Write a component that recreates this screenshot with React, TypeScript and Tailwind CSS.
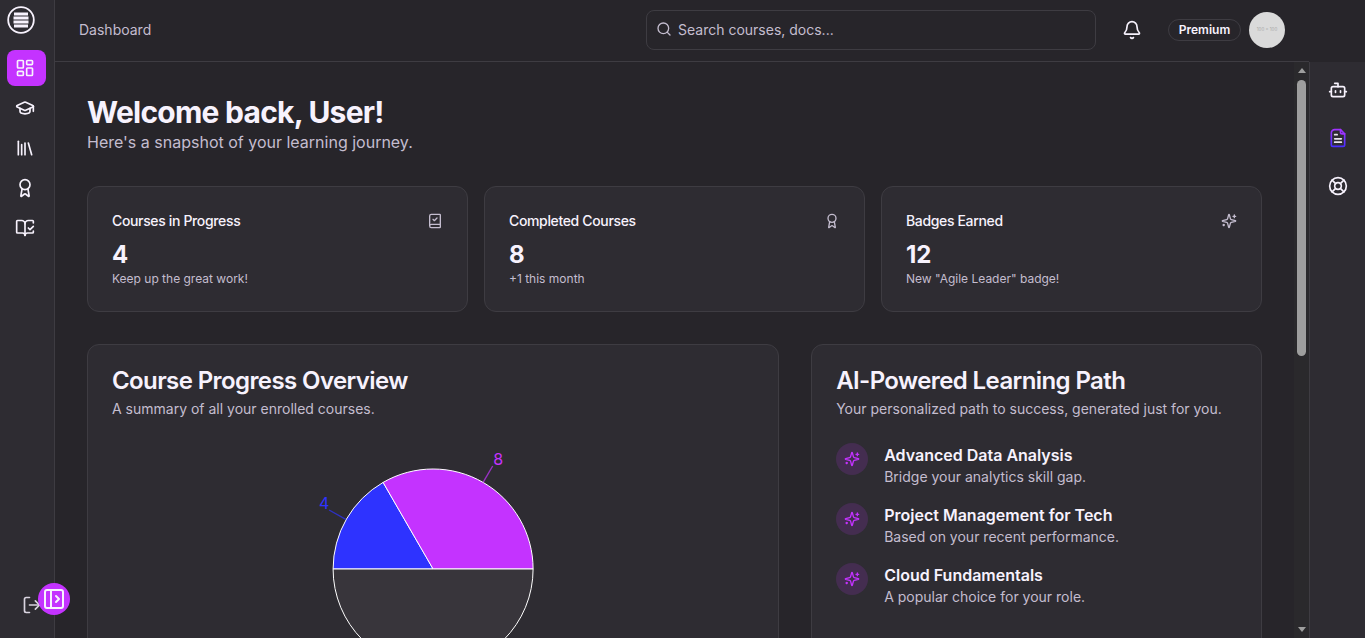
import { Award, Bell, BookCheck, BookOpenCheck, Bot, GraduationCap, LayoutDashboard, Library, LifeBuoy, LogOut, PanelLeftOpen, Search } from 'lucide-react'

const navItems = [
  { icon: LayoutDashboard, active: true },
  { icon: GraduationCap },
  { icon: Library },
  { icon: Award },
  { icon: BookOpenCheck },
]

function SparkleIcon({ size = 16, className = '' }: { size?: number; className?: string }) {
  return (
    <svg width={size} height={size} viewBox="0 0 24 24" fill="none" stroke="currentColor" strokeWidth="2" strokeLinecap="round" strokeLinejoin="round" className={className}>
      <path d="M9.937 15.5A2 2 0 0 0 8.5 14.063l-6.135-1.582a.5.5 0 0 1 0-.962L8.5 9.936A2 2 0 0 0 9.937 8.5l1.582-6.135a.5.5 0 0 1 .963 0L14.063 8.5A2 2 0 0 0 15.5 9.937l6.135 1.581a.5.5 0 0 1 0 .964L15.5 14.063a2 2 0 0 0-1.437 1.437l-1.582 6.135a.5.5 0 0 1-.963 0z" />
      <path d="M20 3v4" />
      <path d="M22 5h-4" />
      <path d="M4 17v2" />
      <path d="M5 18H3" />
    </svg>
  )
}

const stats = [
  { title: 'Courses in Progress', value: '4', note: 'Keep up the great work!', icon: BookCheck },
  { title: 'Completed Courses', value: '8', note: '+1 this month', icon: Award },
  { title: 'Badges Earned', value: '12', note: 'New "Agile Leader" badge!', icon: SparkleIcon },
]

const paths = [
  { title: 'Advanced Data Analysis', note: 'Bridge your analytics skill gap.' },
  { title: 'Project Management for Tech', note: 'Based on your recent performance.' },
  { title: 'Cloud Fundamentals', note: 'A popular choice for your role.' },
]

function Logo() {
  return (
    <svg width="28" height="28" viewBox="0 0 28 28" fill="none">
      <circle cx="14" cy="14" r="12.8" stroke="#f7f2fd" strokeWidth="1.8" />
      <rect x="7" y="6.5" width="14" height="3" fill="#f7f2fd" />
      <rect x="6.5" y="10.5" width="15" height="3" fill="#f7f2fd" />
      <rect x="6.5" y="14.5" width="15" height="3" fill="#f7f2fd" />
      <rect x="7" y="18.5" width="14" height="3" fill="#f7f2fd" />
    </svg>
  )
}

function NotesIcon() {
  return (
    <svg width="20" height="20" viewBox="0 0 24 24" fill="none" strokeWidth="2" strokeLinecap="round" strokeLinejoin="round">
      <defs>
        <linearGradient id="notes" x1="0" y1="0" x2="0" y2="1">
          <stop offset="0" stopColor="#a033ff" />
          <stop offset="1" stopColor="#4a2eff" />
        </linearGradient>
      </defs>
      <path d="M15 2H8a4 4 0 0 0-4 4v14a2 2 0 0 0 2 2h12a2 2 0 0 0 2-2V7Z" stroke="url(#notes)" />
      <path d="M15 2v3a2 2 0 0 0 2 2h3" stroke="#a033ff" />
      <path d="M8 8h3M8 13h8M8 17h8" stroke="#e9e4ef" />
    </svg>
  )
}

function ProgressPie() {
  return (
    <svg className="block h-[248px] w-full overflow-visible" viewBox="0 0 642 248">
      <path d="M321 124 L221 124 A100 100 0 0 1 271 37.4 Z" fill="#2e33ff" stroke="#fff" />
      <path d="M321 124 L271 37.4 A100 100 0 0 1 421 124 Z" fill="#c433ff" stroke="#fff" />
      <path d="M321 124 L421 124 A100 100 0 0 1 221 124 Z" fill="#38353b" stroke="#fff" />
      <path d="M233.7 74.3 L217 65" stroke="#2e33ff" strokeOpacity="0.7" strokeWidth="1.4" fill="none" />
      <path d="M371 37.4 L380.6 21" stroke="#c433ff" strokeOpacity="0.7" strokeWidth="1.4" fill="none" />
      <text x="212" y="64" textAnchor="middle" fontSize="16" fill="#2e33ff">4</text>
      <text x="386" y="20" textAnchor="middle" fontSize="16" fill="#c433ff">8</text>
    </svg>
  )
}

export default function App() {
  return (
    <div className="relative flex h-screen w-full overflow-hidden bg-[#27252a] text-[#f7f2fd] [font-family:Inter,sans-serif]">
      <aside className="flex w-[55px] shrink-0 flex-col border-r border-[#3e3c42] bg-[#2e2c32] pl-[7px] pt-[6px] pb-[23px]">
        <Logo />
        <nav className="mt-4 flex flex-col gap-1">
          {navItems.map(({ icon: Icon, active }, i) => (
            <div key={i} className={`flex h-9 w-[39px] items-center pl-2 rounded-lg ${active ? 'bg-[#c433ff]' : ''}`}>
              <Icon size={20} />
            </div>
          ))}
        </nav>
        <div className="mt-auto ml-[15px] text-[#d9d4e0]">
          <LogOut size={20} />
        </div>
      </aside>
      <button className="absolute bottom-[23px] left-[38px] flex h-8 w-8 items-center justify-center rounded-full bg-[#c433ff]">
        <PanelLeftOpen size={24} />
      </button>

      <div className="flex min-w-0 flex-1 flex-col">
        <div className="flex h-[62px] shrink-0">
          <header className="flex min-w-0 flex-1 items-center gap-4 border-b border-[#3e3c42] pb-px pl-6 pr-6">
            <span className="text-sm text-[#c4bdcf]">Dashboard</span>
            <div className="ml-auto flex h-10 w-[450px] items-center gap-[6px] rounded-lg border border-[#3e3c42] pl-[9px] text-sm text-[#c4bdcf]">
              <Search size={16} className="-mt-[3px]" />
              <span>Search courses, docs...</span>
            </div>
            <div className="flex h-10 w-10 items-center justify-center">
              <Bell size={20} />
            </div>
            <div className="flex items-center gap-2">
              <span className="flex h-[22px] w-[73px] items-center justify-center rounded-full border border-[#3e3c42] text-xs font-semibold">Premium</span>
              <div className="flex h-9 w-9 items-center justify-center rounded-full bg-[#dadada] text-[4.5px] whitespace-nowrap text-[#a9a9a9]">100 × 100</div>
            </div>
          </header>
          <div className="w-14 shrink-0" />
        </div>

        <div className="flex min-h-0 flex-1">
          <main className="min-w-0 flex-1 overflow-hidden p-8">
            <h1 className="text-3xl font-bold tracking-tight">Welcome back, User!</h1>
            <p className="text-base text-[#c4bdcf]">Here's a snapshot of your learning journey.</p>

            <section className="mt-8 grid grid-cols-3 gap-4">
              {stats.map(({ title, value, note, icon: Icon }) => (
                <div key={title} className="rounded-xl border border-[#3e3c42] bg-[#2e2c32] p-6">
                  <div className="flex items-center justify-between pb-2">
                    <h3 className="text-sm font-medium tracking-tight">{title}</h3>
                    <Icon size={16} className="text-[#c4bdcf]" />
                  </div>
                  <div className="text-2xl font-bold">{value}</div>
                  <p className="text-xs text-[#c4bdcf]">{note}</p>
                </div>
              ))}
            </section>

            <section className="mt-8 grid grid-cols-5 gap-8">
              <div className="col-span-3 rounded-xl border border-[#3e3c42] bg-[#2e2c32] p-6">
                <h2 className="text-2xl leading-6 font-semibold tracking-tight">Course Progress Overview</h2>
                <p className="mt-1.5 text-sm text-[#c4bdcf]">A summary of all your enrolled courses.</p>
                <div className="mt-[26px]">
                  <ProgressPie />
                </div>
              </div>
              <div className="col-span-2 rounded-xl border border-[#3e3c42] bg-[#2e2c32] p-6">
                <h2 className="text-2xl leading-6 font-semibold tracking-tight">AI-Powered Learning Path</h2>
                <p className="mt-1.5 text-sm text-[#c4bdcf]">Your personalized path to success, generated just for you.</p>
                <ul className="mt-6 space-y-4">
                  {paths.map((p) => (
                    <li key={p.title} className="flex items-start gap-4">
                      <div className="flex h-8 w-8 shrink-0 items-center justify-center rounded-full bg-[#c433ff]/15 text-[#c433ff]">
                        <SparkleIcon size={16} />
                      </div>
                      <div>
                        <h4 className="font-semibold">{p.title}</h4>
                        <p className="text-sm text-[#c4bdcf]">{p.note}</p>
                      </div>
                    </li>
                  ))}
                </ul>
              </div>
            </section>
          </main>

          <div className="flex w-[15px] shrink-0 flex-col items-center bg-[#2a292c] py-[6px]">
            <div className="h-0 w-0 border-x-[4.5px] border-b-[5px] border-x-transparent border-b-[#9e9e9e]" />
            <div className="mt-[7px] h-[276px] w-[9px] rounded-full bg-[#9e9e9e]" />
            <div className="mt-auto h-0 w-0 border-x-[4.5px] border-t-[5px] border-x-transparent border-t-[#9e9e9e]" />
          </div>

          <aside className="flex w-14 shrink-0 flex-col items-center gap-2 border-l border-[#3e3c42] bg-[#2e2c32] py-2">
            <div className="flex h-10 w-10 items-center justify-center"><Bot size={20} /></div>
            <div className="flex h-10 w-10 items-center justify-center"><NotesIcon /></div>
            <div className="flex h-10 w-10 items-center justify-center"><LifeBuoy size={20} /></div>
          </aside>
        </div>
      </div>
    </div>
  )
}
